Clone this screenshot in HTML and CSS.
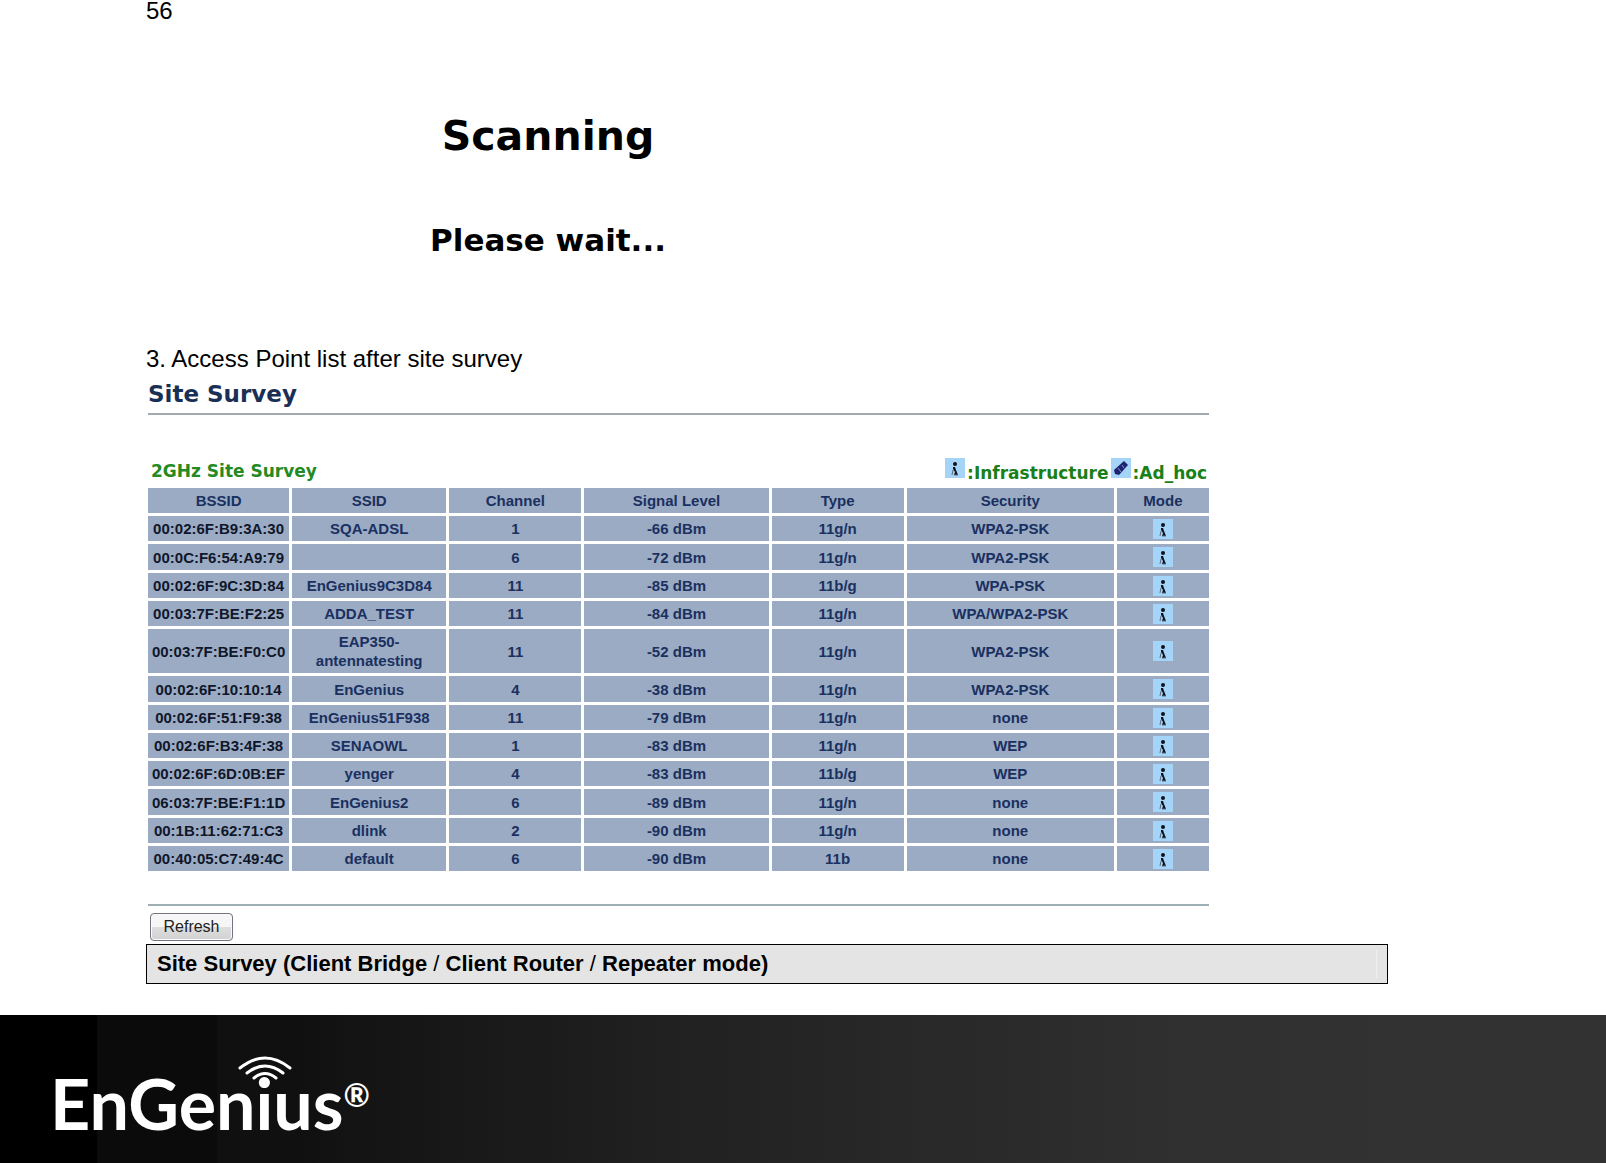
FILE: index.html
```html
<!DOCTYPE html>
<html lang="en">
<head>
<meta charset="utf-8">
<title>Site Survey</title>
<link rel="stylesheet" href="styles.css">
</head>
<body>
<svg class="symbols" aria-hidden="true">
  <symbol id="infra" viewBox="0 0 20 20">
    <rect width="20" height="20" fill="#a4d4f8"/>
    <circle cx="10" cy="6" r="2" fill="#10121c"/>
    <path d="M8 9h2l1 3 2 5h-4l1-3-2-3z" fill="#10121c"/>
    <path d="M8 12l-1 5M9 17h4" stroke="#5a6a80" stroke-width="1"/>
  </symbol>
  <symbol id="adhoc" viewBox="0 0 20 20">
    <rect width="20" height="20" fill="#a4d4f8"/>
    <path d="M3 12L13 3l4 4L8 17l-4-1z" fill="#1c2470"/>
    <path d="M7 10l3 4M11 7l2 3" stroke="#8a90d8" stroke-width="1"/>
  </symbol>
</svg>
<main class="page">
  <p class="page-number">56</p>
  <section class="scan">
    <h1>Scanning</h1>
    <p>Please wait...</p>
  </section>
  <p class="step">3. Access Point list after site survey</p>
  <section class="survey">
    <h2>Site Survey</h2>
    <div class="bar">
      <h3>2GHz Site Survey</h3>
      <div class="legend">
        <svg class="icon"><use href="#infra"/></svg><span>:Infrastructure</span>
        <svg class="icon"><use href="#adhoc"/></svg><span>:Ad_hoc</span>
      </div>
    </div>
    <table>
      <colgroup><col class="c-bssid"><col class="c-ssid"><col class="c-channel"><col class="c-signal"><col class="c-type"><col class="c-security"><col class="c-mode"></colgroup>
      <thead>
        <tr><th>BSSID</th><th>SSID</th><th>Channel</th><th>Signal Level</th><th>Type</th><th>Security</th><th>Mode</th></tr>
      </thead>
      <tbody>
        <tr><td>00:02:6F:B9:3A:30</td><td>SQA-ADSL</td><td>1</td><td>-66 dBm</td><td>11g/n</td><td>WPA2-PSK</td><td><svg class="icon"><use href="#infra"/></svg></td></tr>
        <tr><td>00:0C:F6:54:A9:79</td><td></td><td>6</td><td>-72 dBm</td><td>11g/n</td><td>WPA2-PSK</td><td><svg class="icon"><use href="#infra"/></svg></td></tr>
        <tr><td>00:02:6F:9C:3D:84</td><td>EnGenius9C3D84</td><td>11</td><td>-85 dBm</td><td>11b/g</td><td>WPA-PSK</td><td><svg class="icon"><use href="#infra"/></svg></td></tr>
        <tr><td>00:03:7F:BE:F2:25</td><td>ADDA_TEST</td><td>11</td><td>-84 dBm</td><td>11g/n</td><td>WPA/WPA2-PSK</td><td><svg class="icon"><use href="#infra"/></svg></td></tr>
        <tr><td>00:03:7F:BE:F0:C0</td><td>EAP350-<br>antennatesting</td><td>11</td><td>-52 dBm</td><td>11g/n</td><td>WPA2-PSK</td><td><svg class="icon"><use href="#infra"/></svg></td></tr>
        <tr><td>00:02:6F:10:10:14</td><td>EnGenius</td><td>4</td><td>-38 dBm</td><td>11g/n</td><td>WPA2-PSK</td><td><svg class="icon"><use href="#infra"/></svg></td></tr>
        <tr><td>00:02:6F:51:F9:38</td><td>EnGenius51F938</td><td>11</td><td>-79 dBm</td><td>11g/n</td><td>none</td><td><svg class="icon"><use href="#infra"/></svg></td></tr>
        <tr><td>00:02:6F:B3:4F:38</td><td>SENAOWL</td><td>1</td><td>-83 dBm</td><td>11g/n</td><td>WEP</td><td><svg class="icon"><use href="#infra"/></svg></td></tr>
        <tr><td>00:02:6F:6D:0B:EF</td><td>yenger</td><td>4</td><td>-83 dBm</td><td>11b/g</td><td>WEP</td><td><svg class="icon"><use href="#infra"/></svg></td></tr>
        <tr><td>06:03:7F:BE:F1:1D</td><td>EnGenius2</td><td>6</td><td>-89 dBm</td><td>11g/n</td><td>none</td><td><svg class="icon"><use href="#infra"/></svg></td></tr>
        <tr><td>00:1B:11:62:71:C3</td><td>dlink</td><td>2</td><td>-90 dBm</td><td>11g/n</td><td>none</td><td><svg class="icon"><use href="#infra"/></svg></td></tr>
        <tr><td>00:40:05:C7:49:4C</td><td>default</td><td>6</td><td>-90 dBm</td><td>11b</td><td>none</td><td><svg class="icon"><use href="#infra"/></svg></td></tr>
      </tbody>
    </table>
    <div class="actions"><button type="button">Refresh</button></div>
  </section>
  <h2 class="caption"><span>Site Survey (Client Bridge <i>/</i> Client Router <i>/</i> Repeater mode)</span></h2>
</main>
<footer>
  <div class="logo">
    <span>EnGenius</span><sup>®</sup>
    <svg class="waves" viewBox="0 0 56 26" fill="none" stroke="#fff" stroke-width="3" stroke-linecap="round" aria-hidden="true">
      <path d="M3 12Q28-8 53 12M10 17Q28 3 46 17M17 22Q28 13 39 22"/>
    </svg>
  </div>
</footer>
</body>
</html>
```
FILE: styles.css
```css
* { box-sizing: border-box; }
body {
  margin: 0;
  min-height: 100vh;
  display: flex;
  flex-direction: column;
  background: #fff;
  color: #000;
  font-family: "Liberation Sans", Arial, sans-serif;
}
h1, h2, h3, p { margin: 0; }
.symbols { display: none; }
.icon { width: 20px; height: 20px; flex: none; display: block; }

.page { padding: 0 218px 0 146px; }
.page-number, .step { font-size: 24px; line-height: 28px; }
.page-number { line-height: 22px; }

.scan {
  max-width: 804px;
  padding-top: 90px;
  text-align: center;
  font-family: "DejaVu Sans", Verdana, sans-serif;
  font-weight: bold;
}
.scan h1 { font-size: 41px; line-height: 48px; }
.scan p { margin-top: 62px; font-size: 31px; line-height: 36px; }
.step { margin-top: 87px; }

.survey { max-width: 1065px; padding: 0 2px; }
.survey h2 {
  padding: 7px 0 5px;
  border-bottom: 2px solid #a0aab0;
  color: #1a2f55;
  font: bold 23px/28px "DejaVu Sans", Verdana, sans-serif;
}
.bar {
  display: flex;
  justify-content: space-between;
  align-items: flex-start;
  margin-top: 43px;
  padding: 0 2px 0 3px;
  color: #248a24;
  font: bold 17px/20px "DejaVu Sans", Verdana, sans-serif;
}
.bar h3 { margin-top: 3px; font: inherit; }
.legend { display: flex; gap: 2px; color: #188018; }
.legend span { margin-top: 5px; }

table {
  width: calc(100% + 6px);
  margin: 2px -3px 0;
  table-layout: fixed;
  border-collapse: separate;
  border-spacing: 3px;
  color: #1a3060;
  font-size: 15px;
  line-height: 19px;
  font-weight: bold;
  text-align: center;
}
.c-bssid { width: 141px; }
.c-ssid { width: 154px; }
.c-channel, .c-type { width: 132px; }
.c-signal { width: 184px; }
.c-security { width: 207px; }
.c-mode { width: 92px; }
th, td { height: 25px; padding: 3px 0; background: #9aabc3; }
tbody tr:nth-child(4n+2) td { height: 26px; }
td:first-child { color: #10162a; }
td .icon { margin: -1px auto; }

.actions {
  margin-top: 30px;
  padding: 7px 2px 3px;
  border-top: 2px solid #9fb0b4;
}
button {
  display: block;
  width: 83px;
  height: 28px;
  padding: 0;
  border: 1px solid #70747c;
  border-radius: 4px;
  background: linear-gradient(#f6f6f6 0 50%, #dedede 50%, #d2d2d2);
  box-shadow: inset 0 0 0 1px #fafafa;
  color: #222;
  font: 16px/20px "Liberation Sans", Arial, sans-serif;
}
.caption {
  padding: 5px 10px;
  border: 1px solid #000;
  background: #e4e4e4;
  font-size: 22px;
  line-height: 28px;
}
.caption span { display: block; border-right: 1px solid #efefef; }
.caption i { font-style: normal; font-weight: normal; }

footer {
  flex: 1 0 140px;
  margin-top: 31px;
  padding: 48px 54px 0 50px;
  background: linear-gradient(90deg, #000 0 97px, #0b0b0b 97px 217px, #101010 217px 300px, #141414 360px, #222 700px, #303030 1200px, #323232 1400px);
}
.logo {
  position: relative;
  display: flex;
  width: max-content;
  color: #fff;
  font: bold 70px/80px Lato, "Open Sans", sans-serif;
}
.logo sup { font-size: 32px; line-height: 64px; }
.waves { position: absolute; left: 187px; top: -7px; width: 56px; height: 26px; }
```
